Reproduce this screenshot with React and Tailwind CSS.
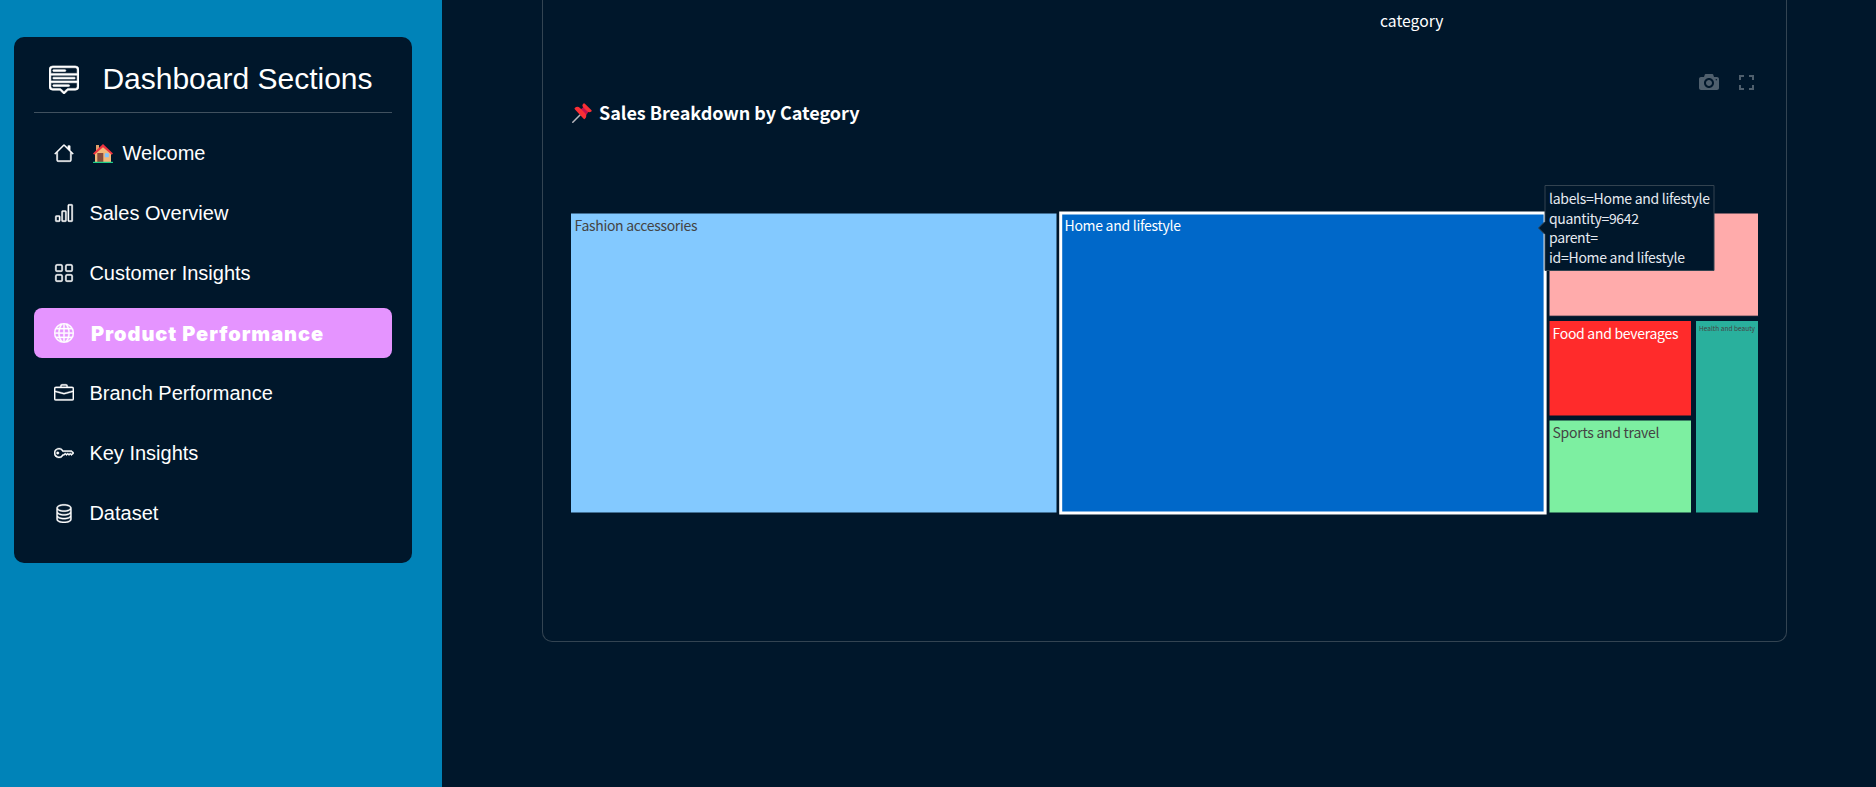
import React from "react";
import {
  BsMenuUp, BsHouse, BsBarChart, BsGrid, BsGlobe, BsBriefcase, BsKey, BsDatabase,
} from "react-icons/bs";

const items = [
  { icon: BsHouse, label: "Welcome", home: true },
  { icon: BsBarChart, label: "Sales Overview" },
  { icon: BsGrid, label: "Customer Insights" },
  { icon: BsGlobe, label: "Product Performance", active: true },
  { icon: BsBriefcase, label: "Branch Performance" },
  { icon: BsKey, label: "Key Insights" },
  { icon: BsDatabase, label: "Dataset" },
];

function HouseEmoji() {
  return (
    <svg viewBox="0 0 20 19" className="h-[19px] w-5 shrink-0">
      <rect x="3" y="1" width="3" height="6" fill="#e0a06a" />
      <path d="M2 9 10 2l8 7v9H2Z" fill="#f3b878" />
      <path d="M10 0 0 9.600l1.300 1.200L10 3.200l8.700 7.600L20 9.600Z" fill="#ef3340" />
      <rect x="4.300" y="9" width="6" height="9" fill="#874c3c" />
      <rect x="11.800" y="9.300" width="4" height="4" rx=".6" fill="#7fc4ff" />
      <rect x="0" y="17.800" width="20" height="1.200" rx=".5" fill="#1fd08a" />
    </svg>
  );
}

function PinEmoji() {
  return (
    <svg viewBox="0 0 20 20" className="h-5 w-5 shrink-0">
      <path d="M.8 19.200 8 12" stroke="#b8b8be" strokeWidth="1.500" strokeLinecap="round" />
      <path d="m12 3.500 4.800 4.700-4 6-6-6Z" fill="#c4104f" />
      <path d="M3 4.800c1.600-1.600 3.500-1.200 5 .2l5.200 5.200c1.500 1.600 1.500 4-.2 5.600a1 1 0 0 1-1.400 0L3 6.400a1 1 0 0 1 0-1.600Z" fill="#f92f35" />
      <path d="M11.200.7a1.200 1.200 0 0 1 1.700 0l6.400 6.200a1 1 0 0 1 0 1.500c-1.300 1.200-2.800 1-4.100-.1l-3.800-3.700C10.200 3.400 10 2 11.200.7Z" fill="#f92f35" />
    </svg>
  );
}

function Sidebar() {
  return (
    <aside className="h-full w-[442px] shrink-0 bg-[#0083b8] pt-[37px] pl-[14px] font-['Liberation_Sans',Arial,sans-serif] text-white">
      <div className="h-[526px] w-[398px] rounded-[10px] bg-[#00172b] px-5 pt-5">
        <div className="flex h-[56px] items-start border-b border-[#40515f] pt-[7px] pl-[15px]">
          <BsMenuUp className="h-[30px] w-[30px]" strokeWidth="0.3" />
          <h1 className="ml-[23.4px] text-[30px] leading-[30px] whitespace-nowrap">Dashboard Sections</h1>
        </div>
        <nav className="mt-[15px] flex flex-col gap-[10px]">
          {items.map(({ icon: Icon, label, active, home }) => (
            <div key={label} className={active ? "flex h-[50px] items-center rounded-lg bg-[#e594ff] pl-5" : "flex h-[50px] items-center pl-5"}>
              <Icon className="h-5 w-5 shrink-0" strokeWidth="0.3" />
              {home && <span className="mr-[9.5px] ml-[19px] flex"><HouseEmoji /></span>}
              <span className={active ? "ml-[17px] pt-[2px] font-['Inter',sans-serif] text-[20px] font-black tracking-[0.95px] whitespace-nowrap" : home ? "text-[20px] whitespace-nowrap" : "ml-[15.4px] text-[20px] whitespace-nowrap"}>{label}</span>
            </div>
          ))}
        </nav>
      </div>
    </aside>
  );
}

const tiles = [
  { label: "Fashion accessories", x: 0.5, y: 0, w: 486.5, h: 300, fill: "#83c9ff", color: "#444444", tx: 4.5, ty: 18, tl: 123 },
  { label: "Food and beverages", x: 979, y: 107.5, w: 142.5, h: 95.5, fill: "#ff2b2b", color: "#ffffff", tx: 982.5, ty: 126, tl: 126 },
  { label: "", x: 979, y: 0, w: 209.500, h: 103.2, fill: "#ffabab" },
  { label: "Sports and travel", x: 979, y: 207, w: 142.5, h: 93, fill: "#7defa1", color: "#444444", tx: 982.5, ty: 225, tl: 107 },
  { label: "Health and beauty", x: 1125.5, y: 107.5, w: 63, h: 192.5, fill: "#29b09d", color: "#444444", tx: 1129, ty: 118, tl: 56, small: true },
];

function Treemap() {
  return (
    <svg width="1190" height="340" viewBox="0 -40 1190 340" className="block overflow-visible font-['Noto_Sans_CJK_SC',sans-serif]">
      {tiles.map((t) => (
        <g key={t.x + "-" + t.y}>
          <rect x={t.x} y={t.y} width={t.w} height={t.h} fill={t.fill} stroke="#00172b" />
          {t.label && (
            <text x={t.tx} y={t.ty} fill={t.color} fontSize={t.small ? 6.5 : 14} textLength={t.tl}>{t.label}</text>
          )}
        </g>
      ))}
      <rect x="490.700" y="0" width="484.400" height="300" fill="#0068c9" stroke="#ffffff" strokeWidth="3" />
      <text x="494.500" y="18" fill="#ffffff" fontSize="14" textLength="116.500">Home and lifestyle</text>
      <path d="M968.500 15 975 8.500V-27.500H1144V57.500H975V21.500Z" fill="#00172b" stroke="#334350" />
      <g fill="#e6eaf1" fontSize="14">
        <text x="979" y="-9" textLength="161">labels=Home and lifestyle</text>
        <text x="979" y="11" textLength="90">quantity=9642</text>
        <text x="979" y="30" textLength="49">parent=</text>
        <text x="979" y="50" textLength="136">id=Home and lifestyle</text>
      </g>
    </svg>
  );
}

function Camera() {
  return (
    <svg viewBox="0 0 1000 1000" className="h-5 w-5 fill-[#4f5f6d]">
      <path transform="matrix(1 0 0 -1 0 850)" d="m500 450c-83 0-150-67-150-150 0-83 67-150 150-150 83 0 150 67 150 150 0 83-67 150-150 150z m400 150h-120c-16 0-34 13-39 29l-31 93c-6 15-23 28-40 28h-340c-16 0-34-13-39-28l-31-94c-6-15-23-28-40-28h-120c-55 0-100-45-100-100v-450c0-55 45-100 100-100h800c55 0 100 45 100 100v450c0 55-45 100-100 100z m-400-550c-138 0-250 112-250 250 0 138 112 250 250 250 138 0 250-112 250-250 0-138-112-250-250-250z m365 380c-19 0-35 16-35 35 0 19 16 35 35 35 19 0 35-16 35-35 0-19-16-35-35-35z" />
    </svg>
  );
}

export default function App() {
  return (
    <div className="flex h-[787px] w-[1876px] overflow-hidden bg-[#00172b]">
      <Sidebar />
      <main className="flex-1 pl-[100px] font-['Noto_Sans_CJK_SC',sans-serif] text-white">
        <section className="h-[642px] w-[1245px] rounded-b-[10px] border border-t-0 border-[#334452] px-[27px]">
          <p className="h-[72px] pt-[9px] pl-[810px] text-[15.7px] leading-6">category</p>
          <div className="flex h-5 items-center justify-end gap-5 pr-[5px]">
            <Camera />
            <svg viewBox="0 0 15 15" className="h-[15px] w-[15px]" fill="none" stroke="#4f5f6d" strokeWidth="2">
              <path d="M1 5V1h4M10 1h4v4M14 10v4h-4M5 14H1v-4" />
            </svg>
          </div>
          <div className="mt-[11px] flex h-5 items-center pl-[2px]">
            <PinEmoji />
            <h2 className="-mt-[2px] ml-[7px] text-[18px] leading-5 font-bold tracking-[-0.04px] whitespace-nowrap">Sales Breakdown by Category</h2>
          </div>
          <div className="mt-[50px]"><Treemap /></div>
        </section>
      </main>
    </div>
  );
}
